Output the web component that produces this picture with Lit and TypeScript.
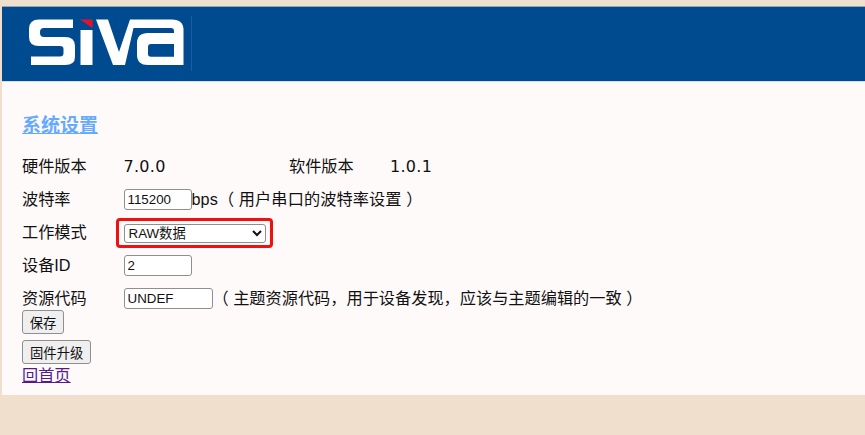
import { LitElement, html, css, svg } from "lit";
import { customElement } from "lit/decorators.js";

const logo = svg`<svg class="logo" width="170" height="66" viewBox="27 15 170 66" aria-label="SIVA">
  <path fill="#fff" d="M73 19.500V28H44Q40 28 40 32V33Q40 37 44 37H65Q75 37 75 46V57Q75 65 65 65H31V56.500H60Q63.500 56.500 63.500 53V49Q63.500 46 60 46H39Q29 46 29 37V29Q29 19.500 39 19.500Z"/>
  <path fill="#e8112d" d="M80 19.500H92.500V28Z"/>
  <rect fill="#fff" x="80.500" y="30" width="12" height="35"/>
  <path fill="#fff" fill-rule="evenodd" d="M96 19.500H108L119 52L130 19.500H172Q183.500 19.500 183.500 30V65H148Q137 65 137 55V43Q137 33 148 33H174V31Q174 28 171 28H133.500L125 65H113ZM151 44H174V56.700H151Q148 56.700 148 54V47Q148 44 151 44Z"/>
  <rect fill="#1d5c9c" x="191" y="16" width="1" height="55"/>
</svg>`;

@customElement("app-root")
export class AppRoot extends LitElement {
  static styles = css`
    :host {
      display: block;
      height: 435px;
      padding-top: 7px;
      box-sizing: border-box;
      background: #f0dfcd;
      font-family: "Liberation Sans", "Noto Sans CJK SC", sans-serif;
      font-size: 16.2px;
      color: #111;
      overflow: hidden;
    }
    .page {
      margin-left: 2px;
      height: 388px;
      background: #fffafa;
    }
    .banner {
      height: 74px;
      background: #004a8f;
      box-shadow: 0 -1px #9aa5ae, 0 1px #d3deec;
      padding: 8px 0 0 25px;
      box-sizing: border-box;
    }
    .logo { display: block; }
    .content {
      padding: 30px 0 0 20px;
    }
    h2 {
      margin: 0 0 9px;
      font-size: 19px;
      line-height: 30px;
      font-weight: bold;
    }
    h2 a { color: #66aaff; }
    .row {
      display: flex;
      align-items: center;
      height: 33px;
      line-height: 24px;
    }
    .label { width: 101.500px; flex: none; padding-bottom: 2px; }
    .ver { font-family: "DejaVu Sans", sans-serif; font-size: 16px; letter-spacing: 0.3px; }
    .hw { width: 165.500px; flex: none; }
    .sw-label { width: 101px; flex: none; padding-bottom: 2px; }
    input, select {
      box-sizing: border-box;
      font: 13.333px "Liberation Sans", "Noto Sans CJK SC", sans-serif;
      color: #111;
      background: #fff;
      border: 1px solid #8f8f8f;
      border-radius: 3px;
      margin: 0;
      outline: none;
    }
    input { height: 21px; padding: 1px 3px; }
    .w68 { width: 68px; }
    .w89 { width: 89px; }
    .sel-box {
      margin-left: -8px;
      padding: 3px 4px 2px 5px;
      border: 3px solid #f01010;
      border-radius: 4px;
      line-height: 0;
    }
    select { width: 142px; height: 19px; padding: 0; }
    .note { white-space: pre; padding-bottom: 2px; }
    .bps { letter-spacing: 0.1px; }
    .actions { display: flex; flex-direction: column; align-items: flex-start; margin-top: -5px; }
    button {
      font: 13.333px "Liberation Sans", "Noto Sans CJK SC", sans-serif;
      color: #111;
      height: 24px;
      padding: 0 7px;
      border: 1px solid #8f8f8f;
      border-radius: 3px;
      background: #efefef;
      margin: 0;
    }
    .save { width: 42px; padding: 0; }
    .upgrade { margin-top: 6px; }
    .home { color: #551a8b; line-height: 22px; }
  `;

  render() {
    return html`
      <div class="page">
        <div class="banner">${logo}</div>
        <div class="content">
          <h2><a href="#">系统设置</a></h2>
          <div class="row">
            <span class="label">硬件版本</span>
            <span class="ver hw">7.0.0</span>
            <span class="sw-label">软件版本</span>
            <span class="ver">1.0.1</span>
          </div>
          <div class="row">
            <span class="label">波特率</span>
            <input class="w68" .value=${"115200"} />
            <span class="note bps">bps（ 用户串口的波特率设置 ）</span>
          </div>
          <div class="row">
            <span class="label">工作模式</span>
            <span class="sel-box"><select><option>RAW数据</option></select></span>
          </div>
          <div class="row">
            <span class="label">设备ID</span>
            <input class="w68" .value=${"2"} />
          </div>
          <div class="row">
            <span class="label">资源代码</span>
            <input class="w89" .value=${"UNDEF"} />
            <span class="note">（ 主题资源代码，用于设备发现，应该与主题编辑的一致 ）</span>
          </div>
          <div class="actions">
            <button class="save">保存</button>
            <button class="upgrade">固件升级</button>
            <a class="home" href="#">回首页</a>
          </div>
        </div>
      </div>
    `;
  }
}
